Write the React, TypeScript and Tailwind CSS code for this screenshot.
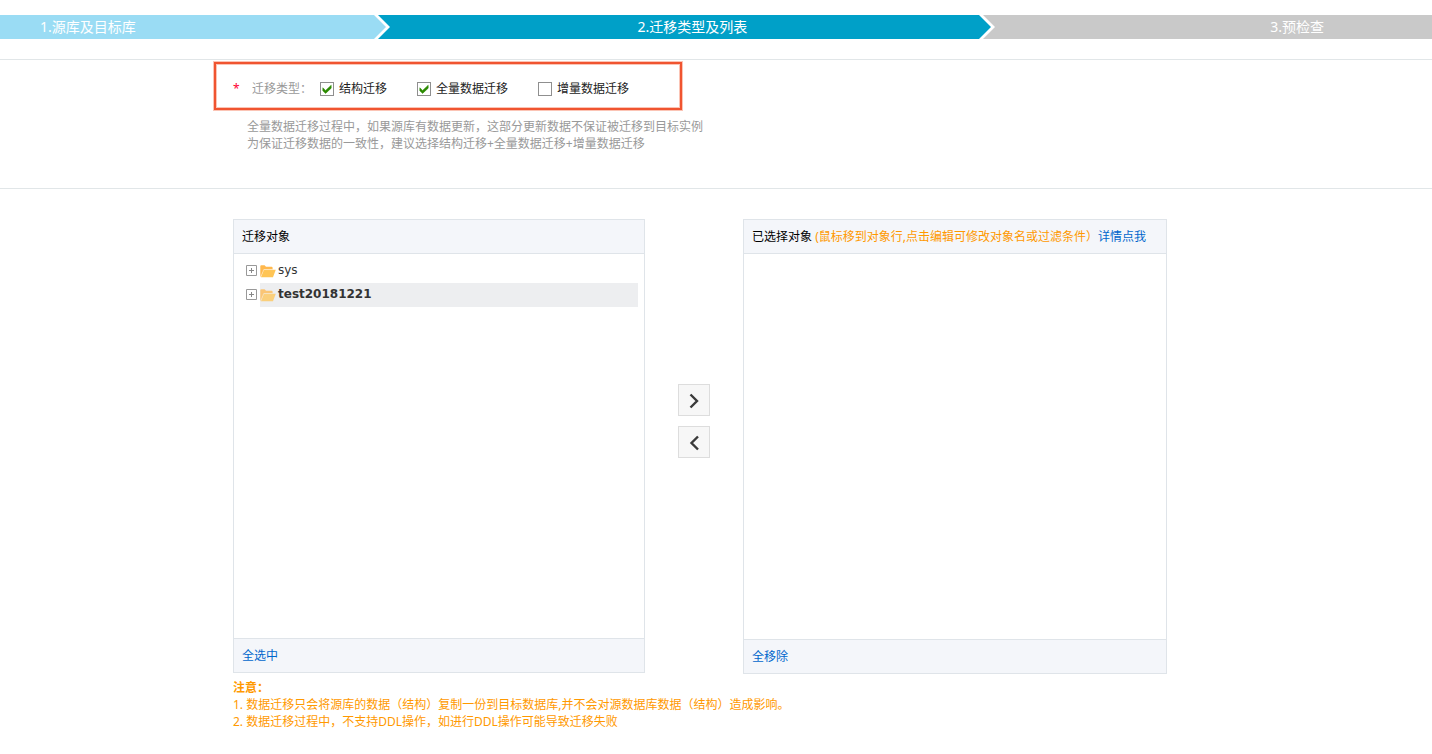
import { ReactNode, useState } from 'react';

interface StepProps {
  label: string;
  className: string;
  labelClassName: string;
  arrow?: { from: string; to: string };
}

function Step({ label, className, labelClassName, arrow }: StepProps) {
  return (
    <li className={`flex h-6 text-sm leading-6 whitespace-nowrap text-white ${className}`}>
      <span className={`flex-1 ${labelClassName}`}>{label}</span>
      {arrow && (
        <svg width="16" height="24" viewBox="0 0 16 24" className="shrink-0" aria-hidden="true">
          <rect width="16" height="24" fill={arrow.to} />
          <path d="M0 0H4L16 12L4 24H0Z" fill="#fff" />
          <path d="M0 0L12 12L0 24Z" fill={arrow.from} />
        </svg>
      )}
    </li>
  );
}

interface CheckOptionProps {
  id: string;
  label: string;
  defaultChecked?: boolean;
}

function CheckOption({ id, label, defaultChecked = false }: CheckOptionProps) {
  return (
    <div className="flex items-center gap-[5px]">
      <span className="grid">
        <input
          id={id}
          type="checkbox"
          defaultChecked={defaultChecked}
          className="peer col-start-1 row-start-1 size-3.5 appearance-none border border-[#8f8f8f] bg-white"
        />
        <svg
          width="14"
          height="14"
          viewBox="0 0 14 14"
          className="pointer-events-none invisible col-start-1 row-start-1 peer-checked:visible"
          aria-hidden="true"
        >
          <path d="M2.8 5.8L5.6 8.4L11.2 3.2V6.2L5.6 11.4L2.8 8.8Z" fill="#2b8a00" stroke="#2b8a00" strokeWidth="0.5" />
        </svg>
      </span>
      <label htmlFor={id} className="text-[#222]">
        {label}
      </label>
    </div>
  );
}

function FolderIcon({ className = '' }: { className?: string }) {
  return (
    <svg width="16" height="13" viewBox="0 0 16 13" className={`shrink-0 ${className}`} aria-hidden="true">
      <path d="M0.3 11V1.2Q0.3 0.3 1.2 0.3H4.6L6 1.8H11.6Q12.6 1.8 12.6 2.8V4.4H4L0.8 12Z" fill="#ffb84d" />
      <path d="M3.8 4.8H15.8L13 12.3H0.9Z" fill="#ffc555" />
      <path d="M0.9 11.5L3.6 4.6H12.6" fill="none" stroke="#fff" strokeWidth="0.5" strokeOpacity="0.7" />
    </svg>
  );
}

interface TreeNodeProps {
  name: string;
  selected: boolean;
  onSelect: () => void;
}

function TreeNode({ name, selected, onSelect }: TreeNodeProps) {
  return (
    <li className="flex h-6 items-center gap-[3px]">
      <button type="button" aria-label={`展开 ${name}`} className="shrink-0 pb-0.5">
        <svg width="11" height="11" viewBox="0 0 11 11" className="block" aria-hidden="true">
          <path d="M0.5 0.5H10.5V10.5H0.5Z" fill="#fff" stroke="#999" />
          <path d="M3 5.5H8M5.5 3V8" stroke="#888" />
        </svg>
      </button>
      <button
        type="button"
        onClick={onSelect}
        className={`flex h-6 flex-1 items-center gap-0.5 font-['DejaVu_Sans',sans-serif] text-[#333] ${
          selected ? 'bg-[#edeef0] font-bold' : ''
        }`}
      >
        <FolderIcon className={selected ? 'opacity-75' : ''} />
        <span className="pb-0.5">{name}</span>
      </button>
    </li>
  );
}

interface PanelProps {
  title: ReactNode;
  action: string;
  bodyClassName: string;
  children?: ReactNode;
}

function Panel({ title, action, bodyClassName, children }: PanelProps) {
  return (
    <section className="border border-[#dfe4e9]">
      <h2 className="h-[34px] border-b border-[#dfe4e9] bg-[#f4f6fa] px-2 leading-[34px] whitespace-nowrap text-black">
        {title}
      </h2>
      <div className={bodyClassName}>{children}</div>
      <div className="h-[34px] border-t border-[#dfe4e9] bg-[#f4f6fa] px-2 leading-[34px]">
        <button type="button" className="text-[#0066cc]">
          {action}
        </button>
      </div>
    </section>
  );
}

function MoveButton({ label, path }: { label: string; path: string }) {
  return (
    <button
      type="button"
      aria-label={label}
      className="flex size-8 items-center justify-center border border-[#ddd] bg-[#f7f7f7] pt-0.5"
    >
      <svg width="10" height="16" viewBox="0 0 10 16" fill="none" stroke="#3a3a3a" strokeWidth="2.4" aria-hidden="true">
        <path d={path} />
      </svg>
    </button>
  );
}

const databases = ['sys', 'test20181221'];

export default function App() {
  const [selected, setSelected] = useState('test20181221');

  return (
    <main className="bg-white pt-[15px] font-['Noto_Sans','Noto_Sans_CJK_SC',sans-serif] text-xs">
      {/* Step bar */}
      <ol className="flex">
        <Step
          label="1.源库及目标库"
          className="w-[27.2%] bg-[#9adcf4]"
          labelClassName="pl-10"
          arrow={{ from: '#9adcf4', to: '#00a0c8' }}
        />
        <Step
          label="2.迁移类型及列表"
          className="w-[42.3%] bg-[#00a0c8]"
          labelClassName="pl-4 text-center"
          arrow={{ from: '#00a0c8', to: '#c9c9c9' }}
        />
        <Step label="3.预检查" className="flex-1 bg-[#c9c9c9]" labelClassName="pr-[108px] text-right" />
      </ol>

      {/* Migration type */}
      <section className="mt-5 border-y border-[#e1e6e8] pt-0.5 pb-9 pl-[214px]">
        <fieldset className="flex w-[468px] items-center border-2 border-[#f05430] pt-[15px] pb-[9px] pl-[17px] leading-5 shadow-[0_0_0_1px_#fbc4b5,inset_0_0_0_1px_#fbc4b5]">
          <span className="w-[19px] text-[#ff0033]">*</span>
          <span className="w-[68px] text-[#999]">迁移类型：</span>
          <div className="flex gap-[30px]">
            <CheckOption id="structure" label="结构迁移" defaultChecked />
            <CheckOption id="full" label="全量数据迁移" defaultChecked />
            <CheckOption id="incremental" label="增量数据迁移" />
          </div>
        </fieldset>
        <div className="mt-2 pl-[33px] leading-[17px] text-[#999]">
          <p>全量数据迁移过程中，如果源库有数据更新，这部分更新数据不保证被迁移到目标实例</p>
          <p>为保证迁移数据的一致性，建议选择结构迁移+全量数据迁移+增量数据迁移</p>
        </div>
      </section>

      {/* Object picker */}
      <div className="grid grid-cols-[412fr_98fr_424fr] items-start pt-[30px] pr-[265px] pl-[233px]">
        <Panel title="迁移对象" action="全选中" bodyClassName="h-[384px] pt-[5px] pr-1.5 pl-3">
          <ul>
            {databases.map((name) => (
              <TreeNode key={name} name={name} selected={name === selected} onSelect={() => setSelected(name)} />
            ))}
          </ul>
        </Panel>
        <div className="flex flex-col items-center gap-2.5 pt-[165px]">
          <MoveButton label="添加" path="M1.5 1.5L8 8L1.5 14.5" />
          <MoveButton label="移除" path="M9 1.5L2.5 8L9 14.5" />
        </div>
        <Panel
          title={
            <>
              已选择对象 <span className="text-[#ff9900]">(鼠标移到对象行,点击编辑可修改对象名或过滤条件）</span>
              <a href="#" className="text-[#0066cc]">
                详情点我
              </a>
            </>
          }
          action="全移除"
          bodyClassName="h-[385px]"
        />
      </div>

      {/* Notes */}
      <div className="mt-[5px] pl-[233px] leading-[17px] text-[#ff9900]">
        <p className="font-bold">注意：</p>
        <p>1. 数据迁移只会将源库的数据（结构）复制一份到目标数据库,并不会对源数据库数据（结构）造成影响。</p>
        <p>2. 数据迁移过程中，不支持DDL操作，如进行DDL操作可能导致迁移失败</p>
      </div>
    </main>
  );
}
